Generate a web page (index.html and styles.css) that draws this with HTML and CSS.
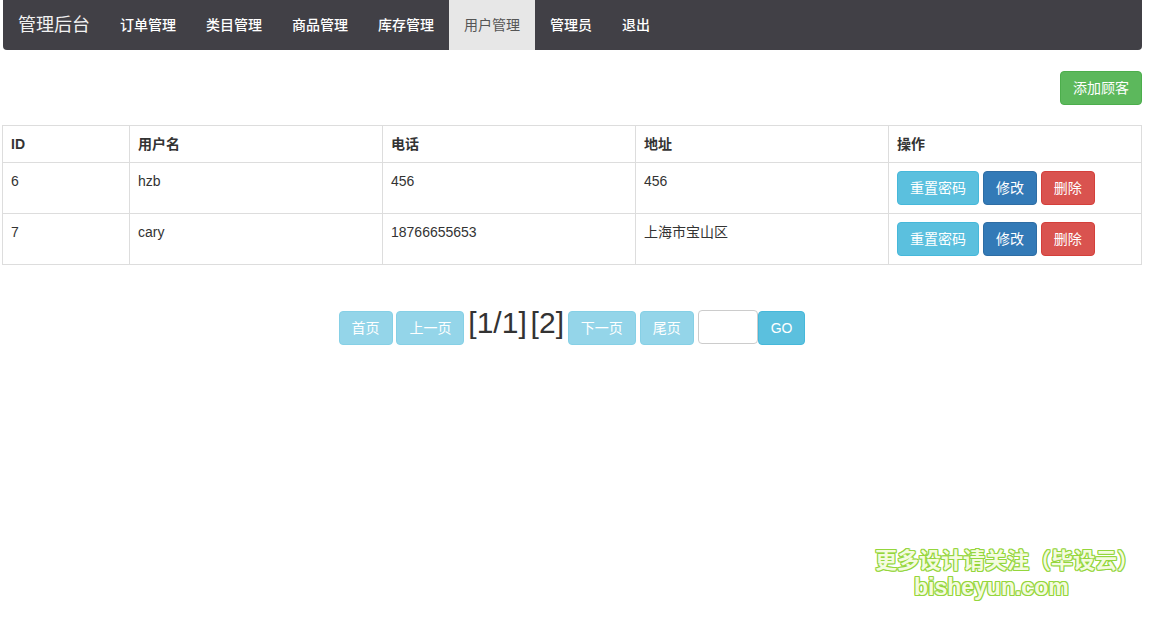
FILE: index.html
```html
<!DOCTYPE html>
<html lang="zh-CN">
<head>
<meta charset="utf-8">
<title>管理后台</title>
<link rel="stylesheet" href="styles.css">
</head>
<body>
<div class="page">
  <nav class="navbar">
    <a class="brand" href="#">管理后台</a>
    <ul class="nav">
      <li><a href="#">订单管理</a></li>
      <li><a href="#">类目管理</a></li>
      <li><a href="#">商品管理</a></li>
      <li><a href="#">库存管理</a></li>
      <li class="active"><a href="#">用户管理</a></li>
      <li><a href="#">管理员</a></li>
      <li><a href="#">退出</a></li>
    </ul>
  </nav>
  <div class="toolbar"><a class="btn btn-success" href="#">添加顾客</a></div>
  <table class="table">
    <colgroup>
      <col class="col-id"><col class="col-main"><col class="col-main"><col class="col-main"><col class="col-main">
    </colgroup>
    <thead>
      <tr><th>ID</th><th>用户名</th><th>电话</th><th>地址</th><th>操作</th></tr>
    </thead>
    <tbody>
      <tr>
        <td>6</td><td>hzb</td><td>456</td><td>456</td>
        <td>
          <a class="btn btn-info" href="#">重置密码</a>
          <a class="btn btn-primary" href="#">修改</a>
          <a class="btn btn-danger" href="#">删除</a>
        </td>
      </tr>
      <tr>
        <td>7</td><td>cary</td><td>18766655653</td><td>上海市宝山区</td>
        <td>
          <a class="btn btn-info" href="#">重置密码</a>
          <a class="btn btn-primary" href="#">修改</a>
          <a class="btn btn-danger" href="#">删除</a>
        </td>
      </tr>
    </tbody>
  </table>
  <div class="pager">
    <a class="btn btn-info disabled" href="#">首页</a>
    <a class="btn btn-info disabled" href="#">上一页</a>
    <span class="count">[1/1]</span>
    <span class="count">[2]</span>
    <a class="btn btn-info disabled" href="#">下一页</a>
    <a class="btn btn-info disabled" href="#">尾页</a>
    <input class="page-input" type="text" aria-label="页码"><a class="btn btn-info" href="#">GO</a>
  </div>
</div>
<div class="watermark">
  <div class="wm-cn">更多设计请关注（毕设云）</div>
  <div class="wm-en">bisheyun.com</div>
</div>
</body>
</html>
```
FILE: styles.css
```css
* {
  box-sizing: border-box;
}

html, body {
  margin: 0;
  padding: 0;
}

body {
  position: relative;
  min-height: 623px;
  background: #fff;
  color: #333;
  font-family: "Liberation Sans", "Noto Sans CJK SC", sans-serif;
  font-size: 14px;
  line-height: 20px;
}

a {
  text-decoration: none;
}

.page {
  width: 1142px;
  padding-left: 2px;
}

.navbar {
  display: flex;
  height: 50px;
  margin-left: 1px;
  margin-bottom: 21px;
  background: #414046;
  border-radius: 0 0 4px 4px;
}

.brand {
  padding: 15px;
  color: #f2f2f2;
  font-size: 18px;
  line-height: 20px;
}

.nav {
  display: flex;
  margin: 0;
  padding: 0;
  list-style: none;
}

.nav a {
  display: block;
  height: 50px;
  padding: 15px;
  color: #fff;
  font-weight: 500;
}

.nav .active a {
  background: #e7e7e7;
  color: #555;
  font-weight: 400;
}

.toolbar {
  display: flex;
  justify-content: flex-end;
  margin-bottom: 20px;
}

.btn {
  display: inline-block;
  height: 34px;
  padding: 6px 12px;
  border: 1px solid transparent;
  border-radius: 4px;
  color: #fff;
  font-size: 14px;
  line-height: 20px;
  white-space: nowrap;
  vertical-align: baseline;
}

.btn-success {
  background: #5cb85c;
  border-color: #4cae4c;
}

.btn-info {
  background: #5bc0de;
  border-color: #46b8da;
}

.btn-primary {
  background: #337ab7;
  border-color: #2e6da4;
}

.btn-danger {
  background: #d9534f;
  border-color: #d43f3a;
}

.disabled {
  opacity: 0.65;
}

.table {
  width: 1140px;
  table-layout: fixed;
  border-collapse: collapse;
  border: 1px solid #ddd;
}

.col-id {
  width: 127px;
}

.col-main {
  width: 253px;
}

.table th,
.table td {
  padding: 8px;
  border: 1px solid #ddd;
  text-align: left;
  vertical-align: top;
  line-height: 20px;
}

.table th {
  font-weight: bold;
}

.pager {
  margin-top: 37px;
  text-align: center;
}

.count {
  font-size: 30px;
  line-height: 42px;
}

.page-input {
  width: 60px;
  height: 34px;
  padding: 6px 12px;
  border: 1px solid #ccc;
  border-radius: 4px;
  background: #fff;
  font-size: 14px;
  vertical-align: 1px;
}

.watermark {
  position: absolute;
  left: 875px;
  top: 546px;
  width: 280px;
  color: #f4fbe0;
  font-weight: bold;
  text-shadow:
    1px 0 0 #94d63c, -1px 0 0 #94d63c, 0 1px 0 #94d63c, 0 -1px 0 #94d63c,
    1px 1px 0 #94d63c, -1px -1px 0 #94d63c, 1px -1px 0 #94d63c, -1px 1px 0 #94d63c;
}

.wm-cn {
  font-size: 22px;
  line-height: 30px;
}

.wm-en {
  margin-left: 39px;
  font-size: 23px;
  line-height: 23px;
}
```
